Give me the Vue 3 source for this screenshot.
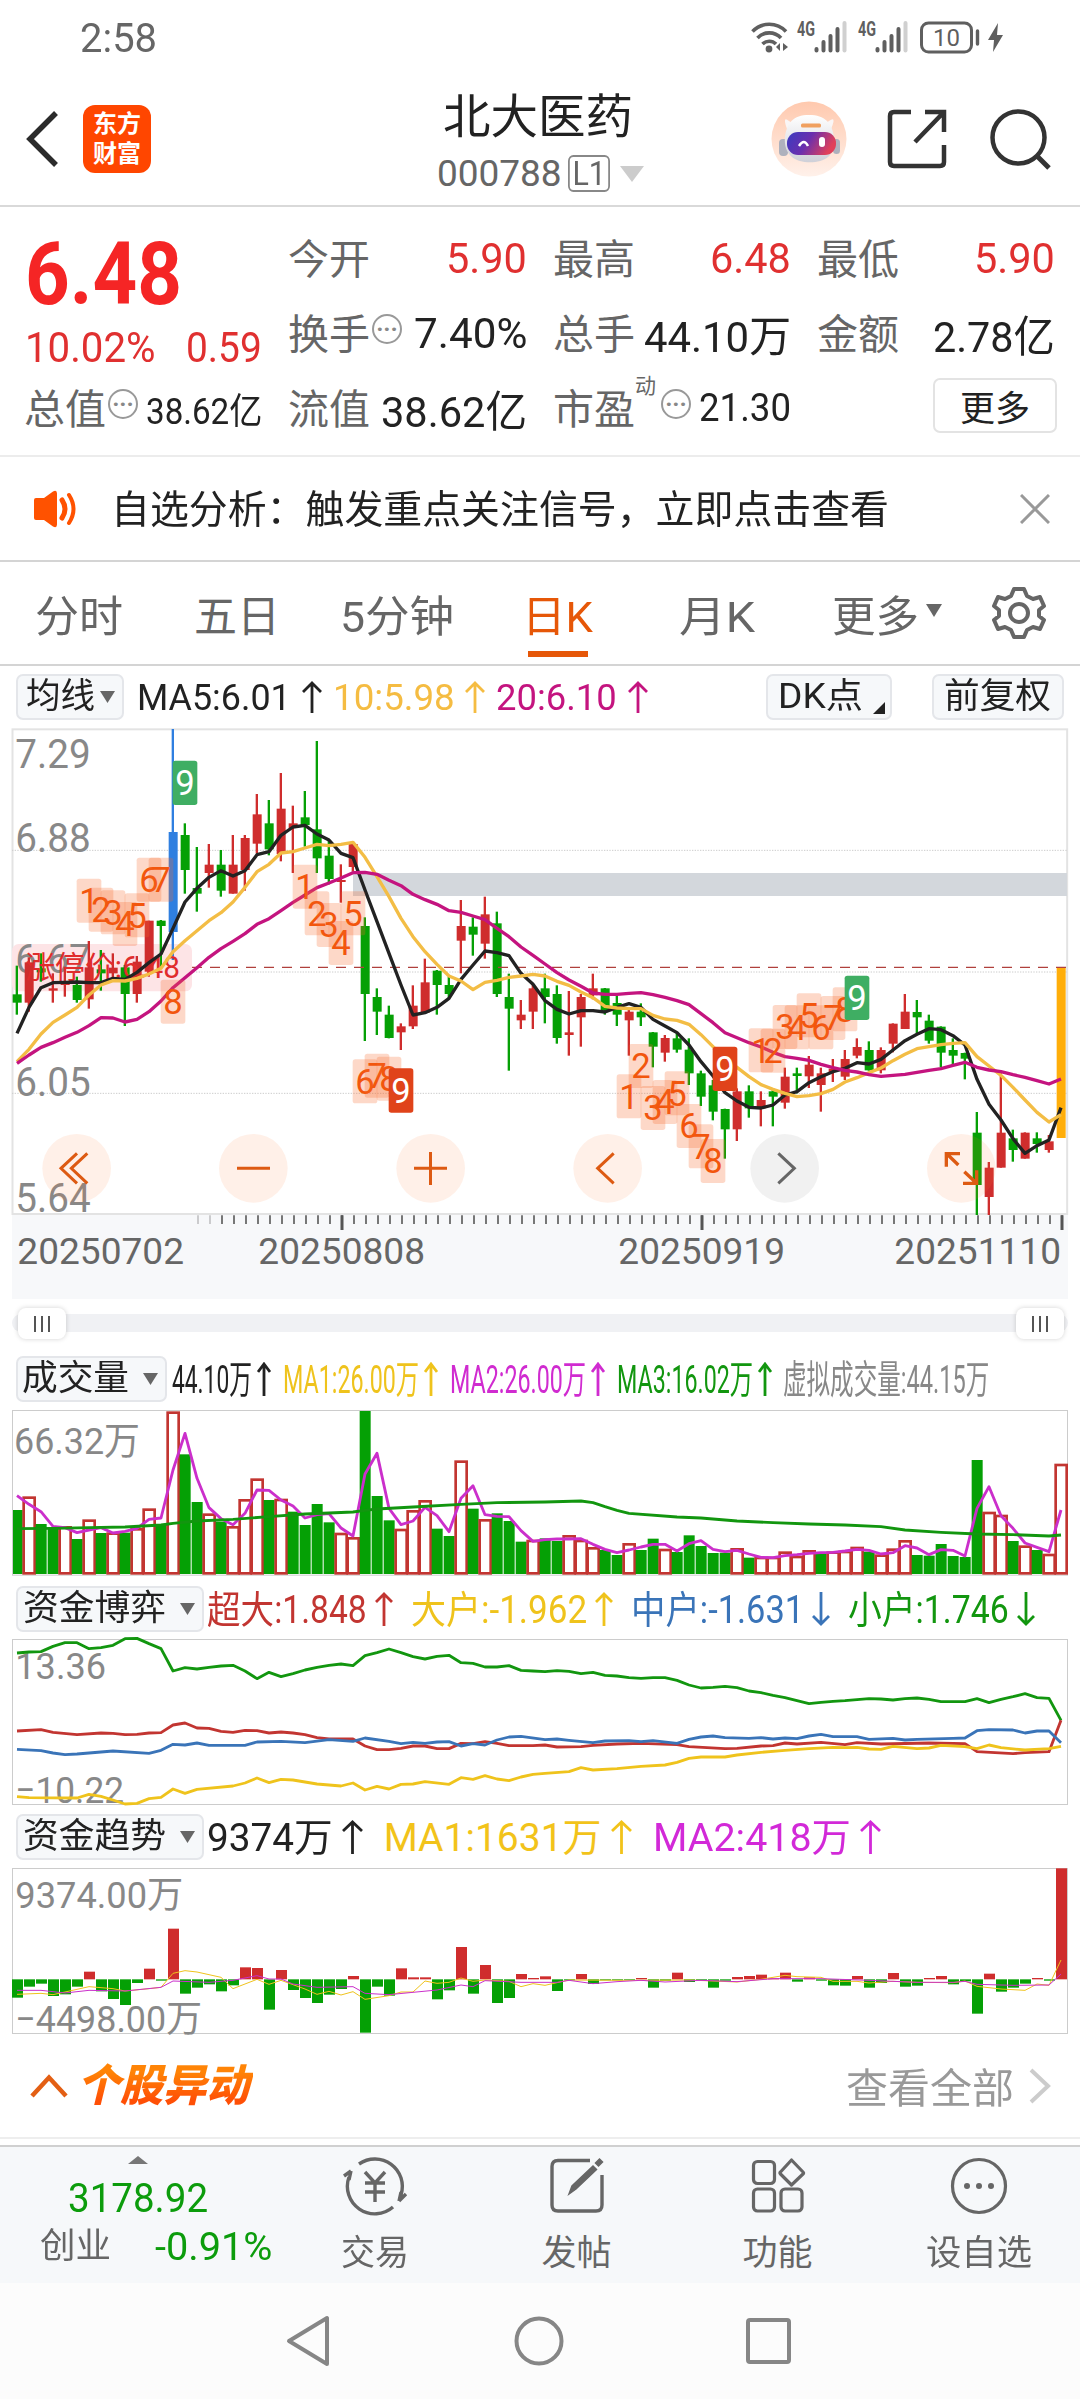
<script setup>
import { ref } from 'vue';

const vFit = {
  mounted(el, { value }) {
    const natural = el.offsetWidth;
    if (!natural || !value) return;
    el.style.transform = `scaleX(${value / natural})`;
    el.style.marginRight = `${value - natural}px`;
  },
};

const activeTab = ref('日K');

const tabs = [
  { name: '分时', w: 88 },
  { name: '五日', w: 86 },
  { name: '5分钟', w: 114 },
  { name: '日K', w: 71 },
  { name: '月K', w: 76 },
];

const maRow = [
  { text: 'MA5:6.01', w: 154, color: '#222' },
  { text: '10:5.98', w: 122, color: '#f5bc42' },
  { text: '20:6.10', w: 121, color: '#c4147f' },
];

const volRow = [
  { text: '44.10万', w: 80, color: '#222' },
  { text: 'MA1:26.00万', w: 136, color: '#efc31c' },
  { text: 'MA2:26.00万', w: 136, color: '#d02bd0' },
  { text: 'MA3:16.02万', w: 136, color: '#12960f' },
];

const gameRow = [
  { text: '超大:1.848', w: 160, color: '#c23531', dir: 'up' },
  { text: '大户:-1.962', w: 176, color: '#efc31c', dir: 'up' },
  { text: '中户:-1.631', w: 173, color: '#3a74b8', dir: 'down' },
  { text: '小户:1.746', w: 161, color: '#12960f', dir: 'down' },
];

const trendRow = [
  { text: '9374万', w: 126, color: '#222' },
  { text: 'MA1:1631万', w: 218, color: '#f2c31a' },
  { text: 'MA2:418万', w: 198, color: '#d229d8' },
];

const UP = '#cf2d2d';
const DOWN = '#05a005';

// All charts share the same x step, three units are one pixel
const cx = (i) => 51 + 36 * i;
const line = (ys) => ys.map((y, i) => `${cx(i)},${y}`).join(' ');
const sparse = (pts) => {
  const out = [];
  for (let k = 0; k < pts.length; k += 2) out.push(`${cx(pts[k])},${pts[k + 1]}`);
  return out.join(' ');
};

// [type, high, body top, body bottom, low]
const candles = [
  ['g', 737, 823, 848, 884], ['r', 712, 727, 848, 875], ['g', 700, 745, 757, 785], ['r', 760, 805, 812, 848],
  ['r', 740, 785, 795, 830], ['g', 770, 795, 840, 848], ['r', 663, 742, 838, 866], ['g', 690, 748, 760, 812],
  ['r', 700, 743, 760, 775], ['g', 735, 742, 822, 918], ['r', 708, 725, 822, 848], ['r', 602, 602, 755, 770],
  ['g', 600, 602, 618, 740], ['b', 27, 336, 636, 720], ['g', 310, 345, 450, 521], ['g', 381, 504, 521, 575],
  ['r', 372, 434, 459, 503], ['g', 390, 434, 512, 530], ['r', 345, 434, 521, 521], ['r', 345, 354, 450, 512],
  ['r', 222, 283, 371, 400], ['g', 240, 310, 388, 406], ['r', 159, 266, 402, 424], ['r', 257, 310, 324, 459],
  ['g', 213, 292, 315, 380], ['g', 63, 328, 415, 459], ['g', 363, 407, 477, 493], ['r', 433, 480, 486, 548],
  ['r', 372, 372, 441, 455], ['g', 592, 618, 822, 963], ['g', 805, 831, 875, 945], ['g', 857, 884, 954, 955],
  ['r', 910, 919, 937, 990], ['r', 796, 857, 919, 927], ['r', 716, 787, 878, 880], ['g', 750, 752, 795, 884],
  ['g', 770, 795, 822, 835], ['r', 540, 618, 662, 760], ['g', 592, 620, 644, 707], ['r', 530, 583, 671, 716],
  ['g', 575, 610, 822, 831], ['g', 761, 831, 866, 1052], ['r', 840, 884, 901, 927], ['r', 790, 805, 875, 927],
  ['g', 761, 805, 831, 910], ['g', 796, 822, 954, 971], ['r', 813, 937, 945, 1007], ['r', 822, 831, 892, 980],
  ['r', 761, 805, 826, 838], ['g', 804, 805, 870, 884], ['g', 826, 849, 884, 918], ['r', 870, 875, 901, 1007],
  ['g', 850, 875, 892, 918], ['g', 936, 937, 980, 1042], ['r', 945, 954, 998, 1025], ['g', 937, 955, 989, 998],
  ['g', 955, 989, 1060, 1095], ['g', 1052, 1060, 1130, 1158], ['g', 1080, 1096, 1175, 1201], ['g', 1166, 1167, 1228, 1316],
  ['r', 1105, 1114, 1228, 1263], ['g', 1096, 1114, 1165, 1193], ['r', 1114, 1140, 1165, 1219], ['g', 1105, 1114, 1130, 1219],
  ['r', 1043, 1070, 1148, 1166], ['g', 1043, 1060, 1068, 1120], ['r', 1008, 1034, 1069, 1104], ['r', 1043, 1060, 1095, 1175],
  ['r', 1017, 1046, 1056, 1086], ['r', 990, 1017, 1070, 1080], ['r', 955, 981, 1007, 1015], ['g', 964, 990, 1051, 1052],
  ['r', 982, 990, 1051, 1060], ['r', 910, 911, 971, 997], ['r', 822, 875, 927, 927], ['g', 840, 876, 892, 940],
  ['g', 884, 902, 962, 971], ['g', 919, 920, 998, 1042], ['g', 955, 990, 1007, 1033], ['g', 998, 999, 1016, 1078],
  ['g', 1176, 1238, 1395, 1485], ['r', 1326, 1343, 1431, 1485], ['r', 1060, 1238, 1343, 1343], ['g', 1229, 1255, 1290, 1325],
  ['r', 1237, 1238, 1316, 1316], ['g', 1237, 1255, 1272, 1298], ['r', 1245, 1264, 1290, 1298], ['o', 742, 742, 1254, 1254],
];
const candleColor = { r: UP, g: DOWN, b: '#2f7fe0', o: '#ffae0a' };

const ma5 = [940, 862, 803, 788, 787, 786, 788, 788, 775, 778, 757, 728, 702, 625, 546, 505, 472, 452, 468, 452, 404, 395, 346, 321, 316, 342, 360, 400, 413, 510, 605, 700, 795, 885, 878, 862, 835, 778, 735, 693, 698, 707, 760, 793, 842, 868, 882, 872, 872, 876, 862, 851, 862, 898, 918, 938, 975, 1025, 1068, 1118, 1143, 1162, 1164, 1155, 1125, 1115, 1088, 1070, 1055, 1045, 1028, 1032, 1018, 990, 962, 943, 926, 929, 947, 975, 1078, 1153, 1200, 1256, 1300, 1277, 1260, 1163];
const ma10 = [1025, 988, 942, 907, 885, 862, 825, 795, 782, 783, 775, 762, 745, 695, 662, 632, 602, 578, 546, 502, 455, 433, 399, 395, 384, 373, 377, 373, 367, 412, 470, 530, 595, 650, 695, 733, 768, 783, 809, 787, 781, 772, 768, 763, 768, 784, 796, 816, 833, 859, 864, 866, 866, 886, 897, 901, 913, 944, 980, 1015, 1042, 1070, 1094, 1108, 1120, 1130, 1127, 1121, 1108, 1086, 1073, 1058, 1044, 1022, 1003, 986, 980, 974, 970, 968, 1010, 1038, 1066, 1102, 1140, 1177, 1206, 1184];
const ma20 = [1030, 1005, 982, 968, 952, 937, 917, 893, 894, 906, 898, 875, 843, 803, 773, 743, 712, 686, 664, 641, 613, 596, 572, 547, 525, 503, 489, 474, 458, 457, 463, 481, 497, 523, 539, 553, 572, 577, 588, 599, 625, 650, 681, 706, 732, 758, 780, 799, 819, 823, 823, 820, 818, 824, 832, 842, 854, 881, 908, 938, 953, 968, 981, 997, 1010, 1015, 1021, 1033, 1043, 1051, 1056, 1064, 1069, 1066, 1063, 1057, 1051, 1046, 1036, 1027, 1042, 1050, 1055, 1064, 1072, 1082, 1092, 1077];

// [count, candle index, top of the box]
const marks = [
  [1, 6, 476], [2, 7, 503], [3, 8, 511], [4, 9, 546], [5, 10, 520], [6, 11, 413], [7, 12, 413], [8, 13, 779],
  [1, 24, 434], [2, 25, 514], [3, 26, 549], [4, 27, 603], [5, 28, 514], [6, 29, 1018], [7, 30, 1001], [8, 31, 1010],
  [1, 51, 1063], [2, 52, 972], [3, 53, 1098], [4, 54, 1080], [5, 55, 1054], [6, 56, 1152], [7, 57, 1213], [8, 58, 1257],
  [1, 62, 925], [2, 63, 926], [3, 64, 855], [4, 65, 856], [5, 66, 820], [6, 67, 856], [7, 68, 828], [8, 69, 802],
];
const nines = [
  [14, 122, '#3fae63'],
  [32, 1045, '#e0431a'],
  [59, 980, '#e0431a'],
  [70, 767, '#3fae63'],
];

const priceLabels = [
  ['7.29', 144], ['6.88', 397], ['6.67', 760], ['6.05', 1127], ['5.64', 1476],
];
const dates = [
  ['20250702', 54, 500], ['20250808', 777, 500], ['20250919', 1857, 500], ['20251110', 2685, 500],
];
const ticks = Array.from({ length: 73 }, (_, k) => k + 15);

const volumes = [
  'g360', 'r322', 'g402', 'g414', 'r411', 'g447', 'r391', 'g429', 'r430', 'g428', 'r417', 'r358', 'g405', 'r67', 'g193', 'g336',
  'r373', 'g395', 'r411', 'r330', 'r268', 'g330', 'r329', 'g365', 'g405', 'g342', 'g397', 'r431', 'r444', 'g63', 'g318', 'g391',
  'r419', 'r363', 'r333', 'g416', 'g438', 'r214', 'g356', 'r390', 'g370', 'g393', 'g455', 'r452', 'g445', 'g453', 'r438', 'r452',
  'r474', 'g480', 'g495', 'r462', 'g480', 'g446', 'r479', 'g486', 'g436', 'g468', 'g489', 'g488', 'r477', 'g503', 'r503', 'r503',
  'r487', 'r500', 'r483', 'g490', 'r487', 'r485', 'r473', 'g485', 'r496', 'r478', 'r453', 'g495', 'g497', 'g462', 'g498', 'g501',
  'g210', 'r368', 'r377', 'g453', 'r469', 'g480', 'r494', 'r224',
].map((s) => ({ up: s[0] === 'r', top: Number(s.slice(1)) }));
const volMa = [317, 343, 365, 409, 413, 428, 420, 413, 429, 424, 415, 388, 384, 240, 130, 265, 353, 386, 404, 370, 300, 301, 330, 348, 384, 374, 371, 414, 438, 252, 190, 355, 404, 393, 352, 377, 425, 325, 287, 374, 379, 380, 422, 454, 449, 447, 447, 446, 463, 478, 488, 480, 471, 463, 463, 483, 461, 452, 478, 485, 481, 492, 502, 503, 497, 494, 490, 488, 487, 483, 478, 481, 492, 488, 467, 474, 494, 479, 481, 498, 355, 290, 377, 415, 459, 472, 485, 360];
const volMa3 = [0, 416, 3, 415, 6, 413, 9, 411, 12, 405, 13, 400, 15, 393, 18, 388, 21, 380, 24, 372, 28, 366, 29, 361, 30, 357, 33, 351, 37, 343, 40, 338, 44, 336, 47, 333, 48, 338, 49, 350, 50, 361, 51, 370, 55, 381, 57, 384, 60, 393, 63, 398, 66, 402, 69, 405, 72, 410, 74, 420, 77, 427, 80, 432, 83, 434, 86, 438, 87, 435];

const small = [789, 786, 785, 769, 758, 758, 776, 773, 766, 746, 745, 761, 776, 843, 833, 837, 832, 828, 826, 843, 866, 847, 860, 851, 840, 832, 826, 822, 827, 797, 788, 777, 788, 800, 807, 799, 796, 818, 820, 831, 831, 827, 841, 843, 845, 842, 844, 851, 847, 856, 858, 863, 865, 863, 863, 871, 885, 894, 892, 889, 893, 903, 908, 916, 923, 932, 941, 937, 934, 932, 929, 926, 927, 930, 926, 924, 928, 935, 935, 935, 926, 938, 928, 920, 911, 923, 925, 991];
const huge = [0, 1023, 2, 1019, 3, 1027, 5, 1034, 7, 1029, 8, 1030, 9, 1034, 10, 1033, 11, 1029, 12, 1028, 13, 1005, 14, 999, 15, 1014, 16, 1015, 17, 1024, 18, 1027, 19, 1021, 20, 1022, 21, 1029, 22, 1026, 23, 1029, 24, 1034, 25, 1043, 26, 1047, 28, 1047, 29, 1068, 30, 1079, 31, 1079, 32, 1075, 33, 1068, 34, 1068, 35, 1076, 36, 1076, 37, 1060, 38, 1061, 39, 1055, 40, 1060, 41, 1067, 43, 1067, 44, 1065, 45, 1071, 47, 1070, 48, 1066, 50, 1062, 52, 1060, 55, 1064, 56, 1070, 59, 1076, 60, 1075, 62, 1068, 63, 1067, 64, 1059, 65, 1062, 67, 1057, 69, 1064, 70, 1058, 72, 1062, 76, 1059, 79, 1061, 80, 1085, 83, 1091, 84, 1088, 86, 1085, 87, 991];
const middle = [0, 1078, 2, 1082, 3, 1089, 4, 1094, 5, 1092, 8, 1083, 11, 1090, 12, 1081, 13, 1063, 14, 1065, 15, 1059, 16, 1066, 19, 1066, 20, 1056, 22, 1054, 24, 1058, 26, 1049, 28, 1054, 29, 1044, 31, 1054, 32, 1061, 33, 1057, 34, 1060, 35, 1056, 36, 1055, 37, 1068, 38, 1061, 39, 1065, 40, 1050, 41, 1041, 42, 1039, 44, 1049, 45, 1047, 46, 1051, 48, 1058, 49, 1053, 51, 1052, 52, 1055, 53, 1052, 55, 1060, 56, 1048, 57, 1041, 58, 1038, 59, 1043, 61, 1045, 62, 1043, 63, 1047, 64, 1044, 65, 1046, 66, 1038, 67, 1033, 68, 1040, 70, 1040, 71, 1048, 73, 1045, 74, 1050, 75, 1048, 78, 1045, 79, 1044, 80, 1022, 81, 1019, 83, 1020, 84, 1029, 85, 1023, 86, 1023, 87, 1058];
const big = [0, 1220, 1, 1223, 5, 1224, 6, 1213, 7, 1219, 8, 1230, 9, 1242, 10, 1240, 11, 1226, 12, 1222, 13, 1197, 14, 1210, 15, 1198, 18, 1188, 19, 1179, 20, 1164, 21, 1178, 22, 1168, 23, 1170, 25, 1182, 27, 1188, 28, 1179, 29, 1200, 30, 1189, 31, 1197, 32, 1183, 33, 1182, 34, 1175, 36, 1183, 37, 1163, 38, 1168, 39, 1157, 40, 1167, 41, 1172, 42, 1161, 43, 1153, 44, 1150, 46, 1145, 47, 1133, 48, 1140, 50, 1136, 52, 1129, 54, 1125, 55, 1117, 56, 1105, 57, 1101, 59, 1101, 60, 1095, 62, 1087, 64, 1081, 66, 1076, 68, 1072, 69, 1073, 70, 1072, 71, 1077, 72, 1078, 73, 1069, 75, 1076, 76, 1074, 77, 1066, 79, 1070, 80, 1076, 81, 1065, 82, 1073, 84, 1080, 86, 1076, 87, 1069];

// bars grow up or down from the zero line at 538
const flows = [593, 560, 551, 588, 583, 560, 515, 574, 597, 615, 549, 506, 542, 386, 581, 563, 553, 574, 556, 502, 504, 629, 510, 570, 594, 609, 584, 567, 528, 698, 560, 587, 505, 532, 532, 598, 571, 441, 581, 495, 609, 594, 522, 534, 529, 573, 541, 522, 552, 541, 541, 540, 534, 563, 542, 518, 546, 541, 563, 542, 531, 528, 524, 535, 518, 545, 532, 542, 556, 557, 528, 563, 549, 519, 560, 557, 534, 528, 553, 544, 641, 521, 575, 563, 551, 534, 542, 205];
const flowMa1 = [0, 583, 2, 580, 3, 584, 6, 560, 8, 566, 9, 573, 11, 566, 12, 562, 13, 520, 14, 512, 15, 516, 17, 532, 18, 566, 20, 538, 21, 553, 22, 541, 24, 567, 25, 583, 26, 574, 27, 585, 28, 575, 29, 598, 31, 587, 32, 576, 33, 576, 34, 543, 35, 550, 36, 547, 37, 534, 38, 544, 39, 540, 41, 544, 42, 560, 43, 551, 44, 556, 46, 540, 51, 541, 56, 540, 60, 546, 62, 538, 64, 526, 65, 530, 67, 532, 68, 544, 70, 544, 71, 549, 73, 544, 75, 547, 78, 548, 79, 543, 80, 559, 82, 567, 84, 571, 85, 552, 86, 556, 87, 480];
const flowMa2 = [0, 571, 2, 571, 4, 579, 6, 571, 9, 573, 12, 562, 13, 543, 16, 547, 18, 541, 20, 527, 21, 537, 22, 537, 23, 552, 25, 562, 28, 560, 29, 580, 31, 584, 35, 570, 37, 555, 38, 560, 39, 542, 42, 547, 45, 547, 46, 541, 48, 551, 50, 545, 52, 541, 54, 546, 57, 541, 60, 545, 63, 536, 67, 536, 71, 541, 75, 547, 78, 547, 79, 544, 80, 553, 83, 556, 86, 555, 87, 522];
</script>

<template>
  <div class="phone">
    <div class="status">
      <span v-fit="77" class="clock">2:58</span>
      <svg class="status-icons" width="256" height="36" viewBox="750 18 256 36">
        <g fill="none" stroke="#5f5f5f" stroke-width="3.6">
          <path d="M752.500 30.500 A23 23 0 0 1 786 30.500" />
          <path d="M757.500 37 A16 16 0 0 1 781 37" />
          <path d="M762.500 43 A9.500 9.500 0 0 1 776 43" />
        </g>
        <circle cx="769" cy="48" r="3.400" fill="#5f5f5f" />
        <path d="M780 42v8l-4-4zM783 42v8l5-4z" fill="#5f5f5f" />
        <g v-for="x in [0, 61]" :key="x">
          <text :x="797 + x" y="34.500" font-size="21" font-weight="700" fill="#5f5f5f" textLength="18" lengthAdjust="spacingAndGlyphs">4G</text>
          <g stroke-width="4" stroke-linecap="round" stroke="#5f5f5f">
            <path :d="`M${816.500 + x} 48v1.500M${823.500 + x} 41v8.500M${830.500 + x} 35v14.500M${837.500 + x} 28v21.500`" />
            <path :d="`M${844.500 + x} 22v27.500`" stroke="#d0d0d0" />
          </g>
        </g>
        <rect x="921.500" y="22" width="50" height="29" rx="7" fill="none" stroke="#5f5f5f" stroke-width="3" />
        <text x="946.500" y="45" font-size="24" fill="#5f5f5f" text-anchor="middle">10</text>
        <path d="M977.500 30v13" stroke="#5f5f5f" stroke-width="3.400" stroke-linecap="round" />
        <path d="M998 22l-10 17h6l-1 12 10-17h-6z" fill="#5f5f5f" />
      </svg>
    </div>

    <header class="header">
      <svg class="back" width="34" height="60" viewBox="0 0 34 60">
        <path d="M31 4L5 30l26 26" fill="none" stroke="#2b2b2b" stroke-width="5.500" />
      </svg>
      <div class="logo"><b>东方</b><b>财富</b></div>
      <div class="title">
        <h1 v-fit="190">北大医药</h1>
        <div class="code">
          <span v-fit="125">000788</span>
          <i v-fit="42" class="level-text">L1</i>
          <svg width="24" height="16" viewBox="0 0 24 16"><path d="M0 0h24L12 16z" fill="#ccc" /></svg>
        </div>
      </div>
      <svg class="robot" width="76" height="76" viewBox="0 0 76 76">
        <defs>
          <linearGradient id="peach" x1="0" y1="0" x2="0" y2="1">
            <stop offset="0" stop-color="#ffc9ae" />
            <stop offset="1" stop-color="#fff1ea" />
          </linearGradient>
          <linearGradient id="visor" x1="0" y1="0" x2="1" y2="0.300">
            <stop offset="0" stop-color="#3a3cc0" />
            <stop offset=".5" stop-color="#6a2fae" />
            <stop offset="1" stop-color="#e0405a" />
          </linearGradient>
          <linearGradient id="shell" x1="0" y1="0" x2="0" y2="1">
            <stop offset="0" stop-color="#fff" />
            <stop offset="1" stop-color="#cfd0d8" />
          </linearGradient>
        </defs>
        <circle cx="38" cy="38" r="37.500" fill="url(#peach)" />
        <path d="M16 28q-5-14 2-8l6 4zM60 28q6-14-2-8l-6 4z" fill="#faf6f6" />
        <rect x="8" y="38" width="9" height="17" rx="4" fill="#aeb1bd" />
        <rect x="62" y="38" width="7" height="15" rx="3.500" fill="#aeb1bd" />
        <path d="M38 14c16 0 23 8 25 22 1 10-2 17-6 20-8 7-28 7-36 0-5-4-8-11-7-20 2-14 8-22 24-22z" fill="url(#shell)" />
        <rect x="30" y="22.500" width="20" height="4" rx="1.500" fill="#f0a060" />
        <rect x="16" y="31" width="49" height="23" rx="11" fill="url(#visor)" />
        <path d="M28 45q5-8 9 0" fill="none" stroke="#fff" stroke-width="2.500" />
        <rect x="48" y="36" width="6" height="10" rx="3" fill="#fff" />
      </svg>
      <svg class="share" width="60" height="60" viewBox="0 0 60 60" fill="none" stroke="#333" stroke-width="4.500">
        <path d="M24 3H7q-4 0-4 4v46q0 4 4 4h46q4 0 4-4V36" />
        <path d="M38 3h19v20M57 3L28 33" />
      </svg>
      <svg class="search" width="61" height="61" viewBox="0 0 61 61" fill="none" stroke="#333" stroke-width="4.500">
        <circle cx="28.500" cy="28.500" r="26" />
        <path d="M47 47l12 12" stroke-width="5" />
      </svg>
    </header>

    <section class="quote">
      <div class="price">
        <strong v-fit="157">6.48</strong>
        <div class="change"><span v-fit="131">10.02%</span><span v-fit="76">0.59</span></div>
      </div>
      <div class="cell"><label>今开</label><span v-fit="81" class="red">5.90</span></div>
      <div class="cell"><label>最高</label><span v-fit="81" class="red">6.48</span></div>
      <div class="cell"><label>最低</label><span v-fit="81" class="red">5.90</span></div>

      <div class="cell"><label>换手</label><i class="dots">···</i><span v-fit="113">7.40%</span></div>
      <div class="cell"><label>总手</label><span v-fit="147">44.10万</span></div>
      <div class="cell"><label>金额</label><span v-fit="122">2.78亿</span></div>

      <div class="cell"><label>总值</label><i class="dots">···</i><span v-fit="116" class="s">38.62亿</span></div>
      <div class="cell"><label>流值</label><span v-fit="146">38.62亿</span></div>
      <div class="cell"><label>市盈<sup>动</sup></label><i class="dots gap">···</i><span v-fit="92" class="m">21.30</span></div>
      <div class="cell end"><button class="more">更多</button></div>
    </section>

    <section class="notice">
      <svg width="46" height="38" viewBox="0 0 46 38">
        <path d="M2 10q0-2 2-2h8L21 1.500q4-2 4 2v31q0 4-4 2L12 30H4q-2 0-2-2z" fill="#ff5200" />
        <path d="M30 10q6 9 0 18" fill="none" stroke="#ff5200" stroke-width="5" stroke-linecap="round" />
        <path d="M37 5q9 14 0 28" fill="none" stroke="#ff5200" stroke-width="4" stroke-linecap="round" />
      </svg>
      <p v-fit="778">自选分析：触发重点关注信号，立即点击查看</p>
      <svg class="close" width="30" height="30" viewBox="0 0 30 30"><path d="M1 1l28 28M29 1L1 29" stroke="#999" stroke-width="3" /></svg>
    </section>

    <nav class="tabs">
      <a v-for="t in tabs" :key="t.name" :class="{ active: t.name === activeTab }" @click="activeTab = t.name">
        <span v-fit="t.w">{{ t.name }}</span>
      </a>
      <a><span v-fit="87">更多</span><svg class="tri" width="16" height="13" viewBox="0 0 16 13"><path d="M0 0h16L8 13z" fill="#666" /></svg></a>
      <svg class="gear" width="54" height="54" viewBox="-27 -27 54 54" fill="none" stroke="#666" stroke-width="4">
        <path d="M-5-24H5L8-17L14-14L21-16L25-7L20-3V3L25 7L21 16L14 14L8 17L5 24H-5L-8 17L-14 14L-21 16L-25 7L-20 3V-3L-25-7L-21-16L-14-14L-8-17Z" stroke-linejoin="round" />
        <circle r="9" />
      </svg>
    </nav>

    <div class="bar ma-bar">
      <div class="pick ma-pick"><span v-fit="69">均线</span><svg width="15" height="12" viewBox="0 0 15 12"><path d="M0 0h15L7.500 12z" fill="#666" /></svg></div>
      <span v-for="m in maRow" :key="m.text" class="ind" :style="{ color: m.color }">
        <span v-fit="m.w">{{ m.text }}</span>
        <svg width="20" height="32" viewBox="0 0 20 32"><path d="M10 32V2M1 11l9-9 9 9" /></svg>
      </span>
      <div class="pick dk"><span v-fit="85">DK点</span><svg width="12" height="12" viewBox="0 0 12 12"><path d="M12 0v12H0z" fill="#222" /></svg></div>
      <div class="pick fq"><span v-fit="107">前复权</span></div>
    </div>

    <svg class="kline" width="1080" height="580" viewBox="0 0 3240 1740">
      <rect x="36" y="1485" width="3168" height="252" fill="#f7f8fa" />
      <rect x="37.500" y="28" width="3164" height="1454" fill="#fff" stroke="#e3e3e3" stroke-width="6" />
      <path d="M36 391H3204M36 756H3204M36 1120H3204" stroke="#ccc" stroke-width="3" stroke-dasharray="4 4" />
      <rect x="1059" y="459" width="2142" height="69" fill="#d3d7dc" />
      <rect x="36" y="672" width="540" height="142" rx="20" fill="#fde4e6" />
      <text v-for="[p, y] in priceLabels" :key="p" x="46" :y="y" font-size="122" fill="#888" textLength="226" lengthAdjust="spacingAndGlyphs">{{ p }}</text>

      <g v-for="(c, i) in candles" :key="i" :fill="candleColor[c[0]]">
        <rect :x="cx(i) - 4" :y="c[1]" width="7" :height="c[4] - c[1]" />
        <rect :x="cx(i) - 13" :y="c[2]" width="27" :height="c[3] - c[2]" />
      </g>

      <text x="76" y="774" font-size="92" fill="#e02c2c" textLength="464" lengthAdjust="spacingAndGlyphs">涨停价:6.48</text>
      <path d="M576 742H3200" stroke="#b0403c" stroke-width="3.500" stroke-dasharray="30 24" />

      <g fill="none" stroke-width="10" stroke-linejoin="round">
        <polyline :points="line(ma5)" stroke="#222" />
        <polyline :points="line(ma10)" stroke="#f3bd45" />
        <polyline :points="line(ma20)" stroke="#c4147f" />
      </g>

      <g v-for="([n, i, y], k) in marks" :key="'m' + k">
        <rect :x="cx(i) - 37" :y="y" width="74" height="132" rx="8" fill="#f96a2c" fill-opacity=".26" />
        <text :x="cx(i)" :y="y + 103" font-size="104" fill="#f2560d" text-anchor="middle">{{ n }}</text>
      </g>
      <g v-for="([i, y, fill], k) in nines" :key="'n' + k">
        <rect :x="cx(i) - 37" :y="y" width="74" height="133" rx="8" :fill="fill" />
        <text :x="cx(i)" :y="y + 103" font-size="104" fill="#fff" text-anchor="middle">9</text>
      </g>

      <g fill="#ff7a30" fill-opacity=".11">
        <circle v-for="x in [230, 760, 1292, 1823, 2884]" :key="x" :cx="x" cy="1345" r="103" />
        <circle cx="2354" cy="1345" r="103" fill="#808080" />
      </g>
      <g fill="none" stroke="#dd5a12" stroke-width="9">
        <path d="M231 1300l-48 45 48 45M262 1300l-48 45 48 45" />
        <path d="M711 1345h99M1242 1345h99M1291.500 1296v99" />
        <path d="M1841 1300l-48 45 48 45" />
        <path d="M2335 1300l48 45-48 45" stroke="#666" />
        <path d="M2839 1340v-39h41M2841 1302l34 33M2889 1390h41v-39M2893 1355l36 34" stroke-width="10" />
      </g>

      <g stroke="#777" stroke-width="6">
        <path v-for="i in ticks" :key="i" :d="`M${54 + 36 * i} 1486v26`" :stroke-opacity="i < 17 ? 0.35 : 1" />
        <path d="M1026 1486v44M2106 1486v44M3186 1486v44" stroke="#555" stroke-width="9" />
      </g>
      <text v-for="[d, x, w] in dates" :key="d" :x="x - 2" y="1632" font-size="111" fill="#666" :textLength="w" lengthAdjust="spacingAndGlyphs">{{ d }}</text>
    </svg>

    <div class="slider">
      <div class="track">
        <svg class="handle" width="48" height="31" viewBox="0 0 48 31"><path d="M17 8v16M24 8v16M31 8v16" stroke="#555" stroke-width="2" /></svg>
        <svg class="handle" width="48" height="31" viewBox="0 0 48 31"><path d="M17 8v16M24 8v16M31 8v16" stroke="#555" stroke-width="2" /></svg>
      </div>
    </div>

    <div class="bar vol-bar">
      <div class="pick vol-pick"><span v-fit="107">成交量</span><svg width="15" height="12" viewBox="0 0 15 12"><path d="M0 0h15L7.500 12z" fill="#666" /></svg></div>
      <span v-for="m in volRow" :key="m.text" class="ind" :style="{ color: m.color }">
        <span v-fit="m.w">{{ m.text }}</span>
        <svg width="14" height="34" viewBox="0 0 14 34"><path d="M7 34V2M1 10l6-8 6 8" /></svg>
      </span>
      <span v-fit="206" class="virtual">虚拟成交量:44.15万</span>
    </div>

    <svg class="panel" width="1080" height="180" viewBox="0 30 3240 540">
      <rect x="37.500" y="61.500" width="3165" height="494" fill="none" stroke="#ccc" stroke-width="3" />
      <template v-for="(v, i) in volumes" :key="i">
        <rect v-if="v.up" :x="cx(i) - 16" :y="v.top + 1" width="33" :height="549 - v.top" fill="#fff" stroke="#c23531" stroke-width="8" />
        <rect v-else :x="cx(i) - (i ? 16 : 12)" :y="v.top" :width="i ? 33 : 29" :height="552 - v.top" :fill="DOWN" />
      </template>
      <g fill="none" stroke-width="8.500" stroke-linejoin="round">
        <polyline :points="line(volMa)" stroke="#cb2fcb" />
        <polyline :points="sparse(volMa3)" stroke="#12960f" />
      </g>
      <text x="42" y="192" font-size="113" fill="#888" textLength="378" lengthAdjust="spacingAndGlyphs">66.32万</text>
    </svg>

    <div class="bar game-bar">
      <div class="pick wide-pick"><span v-fit="143">资金博弈</span><svg width="15" height="12" viewBox="0 0 15 12"><path d="M0 0h15L7.500 12z" fill="#666" /></svg></div>
      <span v-for="m in gameRow" :key="m.text" class="ind" :style="{ color: m.color }">
        <span v-fit="m.w">{{ m.text }}</span>
        <svg width="18" height="34" viewBox="0 0 18 34" :class="m.dir"><path d="M9 34V2M1 10l8-8 8 8" /></svg>
      </span>
    </div>

    <svg class="panel" width="1080" height="174" viewBox="0 732 3240 522">
      <rect x="37.500" y="748.500" width="3165" height="495" fill="none" stroke="#ccc" stroke-width="3" />
      <text x="46" y="867" font-size="112" fill="#888" textLength="272" lengthAdjust="spacingAndGlyphs">13.36</text>
      <text x="46" y="1240" font-size="112" fill="#888" textLength="326" lengthAdjust="spacingAndGlyphs">−10.22</text>
      <g fill="none" stroke-width="8.500" stroke-linejoin="round">
        <polyline :points="line(small)" stroke="#12960f" />
        <polyline :points="sparse(huge)" stroke="#c23531" />
        <polyline :points="sparse(middle)" stroke="#3a74b8" />
        <polyline :points="sparse(big)" stroke="#efc31c" />
      </g>
    </svg>

    <div class="bar trend-bar">
      <div class="pick wide-pick"><span v-fit="143">资金趋势</span><svg width="15" height="12" viewBox="0 0 15 12"><path d="M0 0h15L7.500 12z" fill="#666" /></svg></div>
      <span v-for="m in trendRow" :key="m.text" class="ind" :style="{ color: m.color }">
        <span v-fit="m.w">{{ m.text }}</span>
        <svg width="21" height="34" viewBox="0 0 21 34"><path d="M10.500 34V2M1 11l9.500-9 9.500 9" /></svg>
      </span>
    </div>

    <svg class="panel" width="1080" height="174" viewBox="0 192 3240 522">
      <rect x="37.500" y="205.500" width="3165" height="495" fill="none" stroke="#ccc" stroke-width="3" />
      <text x="46" y="325" font-size="112" fill="#888" textLength="504" lengthAdjust="spacingAndGlyphs">9374.00万</text>
      <text x="46" y="696" font-size="112" fill="#888" textLength="560" lengthAdjust="spacingAndGlyphs">−4498.00万</text>
      <rect
        v-for="(y, i) in flows"
        :key="i"
        :x="cx(i) - 15"
        :y="Math.min(y, 538)"
        width="33"
        :height="Math.abs(y - 538)"
        :fill="y < 538 ? UP : DOWN"
      />
      <g fill="none" stroke-width="3">
        <polyline :points="sparse(flowMa1)" stroke="#efc31c" />
        <polyline :points="sparse(flowMa2)" stroke="#cb2fcb" />
      </g>
    </svg>

    <section class="moves">
      <svg width="38" height="24" viewBox="0 0 38 24"><path d="M2 22L19 3.500 36 22" fill="none" stroke="#e35f14" stroke-width="4.500" /></svg>
      <h2 v-fit="176">个股异动</h2>
      <a><span v-fit="168">查看全部</span>
        <svg width="22" height="36" viewBox="0 0 22 36"><path d="M2 2l17 16L2 34" fill="none" stroke="#ccc" stroke-width="4" /></svg>
      </a>
    </section>

    <footer class="toolbar">
      <div class="index">
        <svg width="20" height="8" viewBox="0 0 20 8"><path d="M10 0l10 8H0z" fill="#777" /></svg>
        <span v-fit="140" class="index-value">3178.92</span>
        <div class="index-row"><span v-fit="71">创业</span><em v-fit="117">-0.91%</em></div>
      </div>
      <div class="tool">
        <svg width="66" height="60" viewBox="-33 -30 66 60" fill="none" stroke="#666" stroke-width="3.400">
          <path d="M-16-22A27.500 27.500 0 0 1 26 9M24 15l7-7M24 15l2-9" />
          <path d="M18 21A27.500 27.500 0 0 1-26-9M-24-15l-7 5M-24-15l-2 9" />
          <path d="M-10-14L0-3 10-14M0-3V16M-10-3h20M-10 6h20" />
        </svg>
        <span v-fit="68">交易</span>
      </div>
      <div class="tool">
        <svg width="60" height="60" viewBox="-30 -30 60 60" fill="none" stroke="#666" stroke-width="3.400">
          <path d="M13-25.500H-19q-6 0-6 6V19q0 6 6 6H19q6 0 6-6V-11" />
          <path d="M-8 8l3-8L16-20l3.500 3.500L-1 3zM18.500-23l4-4 3 3-4 4z" fill="#666" stroke-width="1.500" />
        </svg>
        <span v-fit="70">发帖</span>
      </div>
      <div class="tool">
        <svg width="60" height="60" viewBox="-30 -30 60 60" fill="none" stroke="#666" stroke-width="3.200">
          <rect x="-24.500" y="-24.500" width="21" height="22" rx="4" />
          <rect x="-24.500" y="3" width="21" height="22" rx="4" />
          <rect x="3" y="3" width="21" height="22" rx="4" />
          <path d="M13.500-26L25-14Q26-13 25-12L13.500-1 2.500-12Q1.500-13 2.500-14Z" stroke-linejoin="round" />
        </svg>
        <span v-fit="70">功能</span>
      </div>
      <div class="tool">
        <svg width="60" height="60" viewBox="-30 -30 60 60">
          <circle r="26.500" fill="none" stroke="#666" stroke-width="3.200" />
          <g fill="#666"><circle cx="-12" r="3" /><circle r="3" /><circle cx="12" r="3" /></g>
        </svg>
        <span v-fit="106">设自选</span>
      </div>
    </footer>

    <div class="sysnav">
      <svg width="46" height="54" viewBox="0 0 46 54"><path d="M4 27L42 4v46z" fill="none" stroke="#868686" stroke-width="4" stroke-linejoin="round" /></svg>
      <svg width="54" height="54" viewBox="-27 -27 54 54"><circle r="22.500" fill="none" stroke="#868686" stroke-width="4" /></svg>
      <svg width="46" height="54" viewBox="0 0 46 54"><rect x="2" y="6" width="41" height="42" rx="2" fill="none" stroke="#868686" stroke-width="4" /></svg>
    </div>
  </div>
</template>

<style>
body {
  background: #fff;
}
</style>

<style scoped>
.phone {
  width: 1080px;
  height: 2400px;
  overflow: hidden;
  background: #fff;
  color: #222;
  font-family: Roboto, "Noto Sans CJK SC", sans-serif;
  box-sizing: border-box;
}

.phone * {
  box-sizing: border-box;
}

.phone span,
.phone p,
.phone h1,
.phone h2,
.phone strong,
.phone em,
.level-text {
  white-space: nowrap;
  transform-origin: left center;
  flex: none;
}

svg {
  display: block;
  flex: none;
}

.status {
  display: flex;
  align-items: center;
  justify-content: space-between;
  height: 76px;
  padding: 0 74px 3px 80px;
}

.clock {
  padding-top: 3px;
  font-size: 41px;
  color: #666;
}

.header {
  display: flex;
  align-items: center;
  height: 131px;
  padding: 0 29px 3px 25px;
  border-bottom: 2px solid #d9d9d9;
}

.logo {
  display: flex;
  flex-direction: column;
  align-items: center;
  justify-content: center;
  width: 68px;
  height: 68px;
  margin-left: 24px;
  border-radius: 12px;
  background: #ff4600;
  color: #fff;
  font-size: 24px;
  line-height: 30px;
}

.title {
  width: 420px;
  margin-left: 180px;
  padding: 0 6px 0 0;
  display: flex;
  flex-direction: column;
  align-items: center;
}

.title h1 {
  margin: 2px 0 0;
  font-size: 47px;
  line-height: 62px;
  font-weight: 400;
}

.code {
  display: flex;
  align-items: center;
  height: 42px;
  margin-top: 5px;
  padding-left: 5px;
  color: #666;
  font-size: 37px;
}

.level-text {
  margin-left: 6px;
  padding: 0 3px;
  border: 2px solid #888;
  border-radius: 6px;
  font-style: normal;
  font-size: 34px;
  line-height: 33px;
}

.code svg {
  margin-left: 10px;
}

.robot {
  margin-left: 20px;
}

.share {
  margin-left: 40px;
}

.search {
  margin-left: auto;
}

.quote {
  display: grid;
  grid-template-columns: 237px 238px 237px 237px;
  grid-template-rows: repeat(3, 75px);
  column-gap: 27px;
  height: 250px;
  padding: 13px 0 0 25px;
  border-bottom: 2px solid #ececec;
}

.price {
  grid-row: 1 / 3;
  display: flex;
  flex-direction: column;
}

.price strong {
  align-self: flex-start;
  height: 101px;
  color: #f52525;
  font-size: 88px;
  line-height: 108px;
}

.change {
  display: flex;
  justify-content: space-between;
  color: #e03030;
  font-size: 43px;
  line-height: 52px;
}

.cell {
  display: flex;
  align-items: center;
  justify-content: space-between;
  color: #222;
  font-size: 43px;
}

.cell label {
  position: relative;
  margin-left: -1px;
  padding-bottom: 4px;
  color: #666;
  font-size: 41px;
}

.cell sup {
  position: absolute;
  top: -2px;
  left: 82px;
  font-size: 21px;
  line-height: 24px;
}

.cell span {
  position: relative;
}

.dots {
  display: flex;
  align-items: center;
  justify-content: center;
  width: 30px;
  height: 30px;
  margin: 0 auto 8px 2px;
  border: 2px solid #999;
  border-radius: 50%;
  color: #888;
  font-size: 24px;
  font-style: normal;
  font-weight: 700;
  line-height: 26px;
}

.dots.gap {
  margin-left: 26px;
}

.red {
  color: #e03030;
}

.cell .s {
  font-size: 36px;
}

.cell .m {
  font-size: 39px;
}

.cell.end {
  justify-content: flex-end;
}

.more {
  width: 124px;
  height: 55px;
  margin: 0 -2px 4px 0;
  padding: 0 0 5px;
  border: 2px solid #e3e3e3;
  border-radius: 7px;
  background: #fff;
  color: #222;
  font: 35px Roboto, "Noto Sans CJK SC", sans-serif;
}

.notice {
  display: flex;
  align-items: center;
  height: 105px;
  padding: 0 30px 0 32px;
  border-bottom: 2px solid #d4d4d4;
}

.notice p {
  margin: 0 0 0 33px;
  padding-bottom: 5px;
  font-size: 39px;
}

.close {
  margin-left: auto;
}

.tabs {
  display: grid;
  grid-template-columns: 159px 146px 182px 157px 153px 160px 60px;
  align-items: center;
  height: 104px;
  padding-left: 35px;
  border-bottom: 2px solid #d4d4d4;
  color: #666;
  font-size: 43px;
}

.tabs a {
  display: flex;
  align-items: center;
  height: 102px;
  padding-bottom: 1px;
}

.tabs a.active {
  color: #e65708;
  background: linear-gradient(#e65708, #e65708) 6px 89px / 60px 6px no-repeat;
}

.tri {
  margin: -4px 0 0 7px;
}

.bar {
  display: flex;
  align-items: center;
}

.pick {
  display: flex;
  align-items: center;
  justify-content: space-between;
  height: 46px;
  border: 2px solid #e4e6ea;
  border-radius: 7px;
  background: #f6f8fa;
  color: #222;
  font-size: 35px;
  line-height: 42px;
}

.pick span {
  margin-left: -1px;
}

.ind {
  display: flex;
  align-items: center;
}

.ind path {
  fill: none;
  stroke: currentColor;
  stroke-width: 2.8px;
}

.ma-bar {
  height: 54px;
  padding: 8px 16px 0;
  font-size: 37px;
}

.ma-pick {
  width: 108px;
  padding: 0 7px 0 9px;
}

.ma-bar .ind {
  margin-left: 11px;
}

.ma-bar .ind svg {
  margin-left: 11px;
}

.ma-pick + .ind {
  margin-left: 13px;
}

.dk {
  width: 126px;
  margin-left: auto;
  padding: 0 5px 0 11px;
}

.dk svg {
  align-self: flex-end;
  margin-bottom: 4px;
}

.fq {
  width: 132px;
  margin-left: 40px;
  padding-left: 11px;
}

.slider {
  height: 47px;
  padding: 14px 12px 0;
}

.track {
  display: flex;
  align-items: center;
  justify-content: space-between;
  height: 18px;
  padding: 0 4px 0 6px;
  border-radius: 9px;
  background: #f0f1f4;
}

.handle {
  border-radius: 8px;
  background: #fff;
  box-shadow: 0 0 5px rgba(0, 0, 0, 0.18);
}

.vol-bar {
  height: 53px;
  padding: 10px 0 0 16px;
  font-size: 39px;
}

.vol-pick {
  width: 151px;
  padding: 0 7px 0 5px;
}

.vol-bar .ind {
  margin-left: 12px;
}

.vol-pick + .ind {
  margin-left: 5px;
}

.vol-bar .ind svg {
  margin-left: 5px;
}

.bar .ind span,
.bar .virtual {
  padding-bottom: 6px;
}

.ma-bar .ind span {
  padding-bottom: 0;
}

.virtual {
  margin-left: 11px;
  color: #888;
}

.game-bar {
  height: 54px;
  padding: 4px 0 0 16px;
  font-size: 38px;
}

.wide-pick {
  width: 188px;
  padding: 0 7px 0 6px;
}

.wide-pick + .ind {
  margin-left: 3px;
}

.game-bar .ind + .ind {
  margin-left: 18px;
}

.game-bar .ind svg {
  margin-left: 8px;
}

.ind svg.down {
  transform: rotate(180deg);
}

.trend-bar {
  height: 56px;
  padding: 5px 0 3px 16px;
  font-size: 39px;
}

.trend-bar .ind + .ind {
  margin-left: 21px;
}

.trend-bar .ind svg {
  margin-left: 9px;
}

.moves {
  display: flex;
  align-items: center;
  height: 101px;
  padding: 0 29px 3px 30px;
  border-bottom: 2px solid #eee;
}

.moves h2 {
  margin: 0 0 0 9px;
  padding-right: 4px;
  background: linear-gradient(#ff8406 25%, #ff5006 75%);
  background-clip: text;
  -webkit-background-clip: text;
  color: transparent;
  font-size: 44px;
  line-height: 56px;
  font-weight: 900;
  font-style: italic;
}

.moves a {
  display: flex;
  align-items: center;
  gap: 15px;
  margin-left: auto;
  color: #999;
  font-size: 41px;
}

.moves a span {
  padding-bottom: 3px;
}

.toolbar {
  display: grid;
  grid-template-columns: 274px 202px 201px 201px 202px;
  height: 138px;
  margin-top: 6px;
  border-top: 2px solid #d0d0d0;
  background: #f6f8fa;
  color: #666;
}

.index {
  display: flex;
  flex-direction: column;
  align-items: center;
  padding: 9px 2px 0 4px;
}

.index-value {
  margin-top: 10px;
  color: #0c9c0c;
  font-size: 41px;
  line-height: 48px;
}

.index-row {
  display: flex;
  align-items: center;
  justify-content: space-between;
  align-self: stretch;
  padding: 0 0 0 36px;
  font-size: 35px;
  line-height: 50px;
}

.index-row em {
  color: #0c9c0c;
  font-size: 38px;
  font-style: normal;
}

.tool {
  display: flex;
  flex-direction: column;
  align-items: center;
  padding-top: 9px;
  font-size: 35px;
  line-height: 48px;
}

.tool span {
  margin-top: 14px;
}

.sysnav {
  display: flex;
  align-items: center;
  justify-content: space-between;
  height: 116px;
  padding: 0 288px 0 285px;
  background: #fcfcfc;
}
</style>
